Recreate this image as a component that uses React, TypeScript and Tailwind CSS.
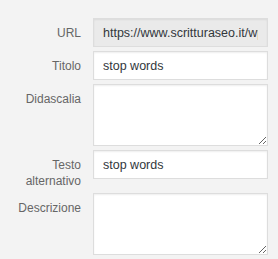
import React from "react";

const font = { fontFamily: '"Liberation Sans", Arial, sans-serif' };

const Row: React.FC<{ label: React.ReactNode; children: React.ReactNode }> = ({
  label,
  children,
}) => (
  <div className="flex items-start mb-[4px]">
    <span className="w-[81px] shrink-0 text-right pt-[7px] text-[12px] leading-[16px] text-[#666]">
      {label}
    </span>
    <div className="ml-[12px] w-[175px]">{children}</div>
  </div>
);

const inputCls =
  "block w-full h-[29px] border border-[#ddd] px-[9px] text-[12.5px] text-[#32373c] shadow-[inset_0_1px_2px_rgba(0,0,0,0.07)] outline-none";

const areaCls =
  "block w-full h-[62px] border border-[#ddd] bg-white px-[9px] py-[6px] text-[12.5px] text-[#32373c] shadow-[inset_0_1px_2px_rgba(0,0,0,0.07)] outline-none";

export default function App() {
  return (
    <div
      className="w-[278px] h-[259px] bg-[#f3f3f3] pt-[18px] overflow-hidden"
      style={font}
    >
      <Row label="URL">
        <input
          readOnly
          className={inputCls + " bg-[#eaeaea]"}
          defaultValue="https://www.scritturaseo.it/wp-content/uploads/stop-words.png"
        />
      </Row>
      <Row label="Titolo">
        <input className={inputCls + " bg-white"} defaultValue="stop words" />
      </Row>
      <Row label="Didascalia">
        <textarea className={areaCls} />
      </Row>
      <Row
        label={
          <>
            Testo
            <br />
            alternativo
          </>
        }
      >
        <input className={inputCls + " bg-white"} defaultValue="stop words" />
      </Row>
      <Row label="Descrizione">
        <textarea className={areaCls} />
      </Row>
    </div>
  );
}
